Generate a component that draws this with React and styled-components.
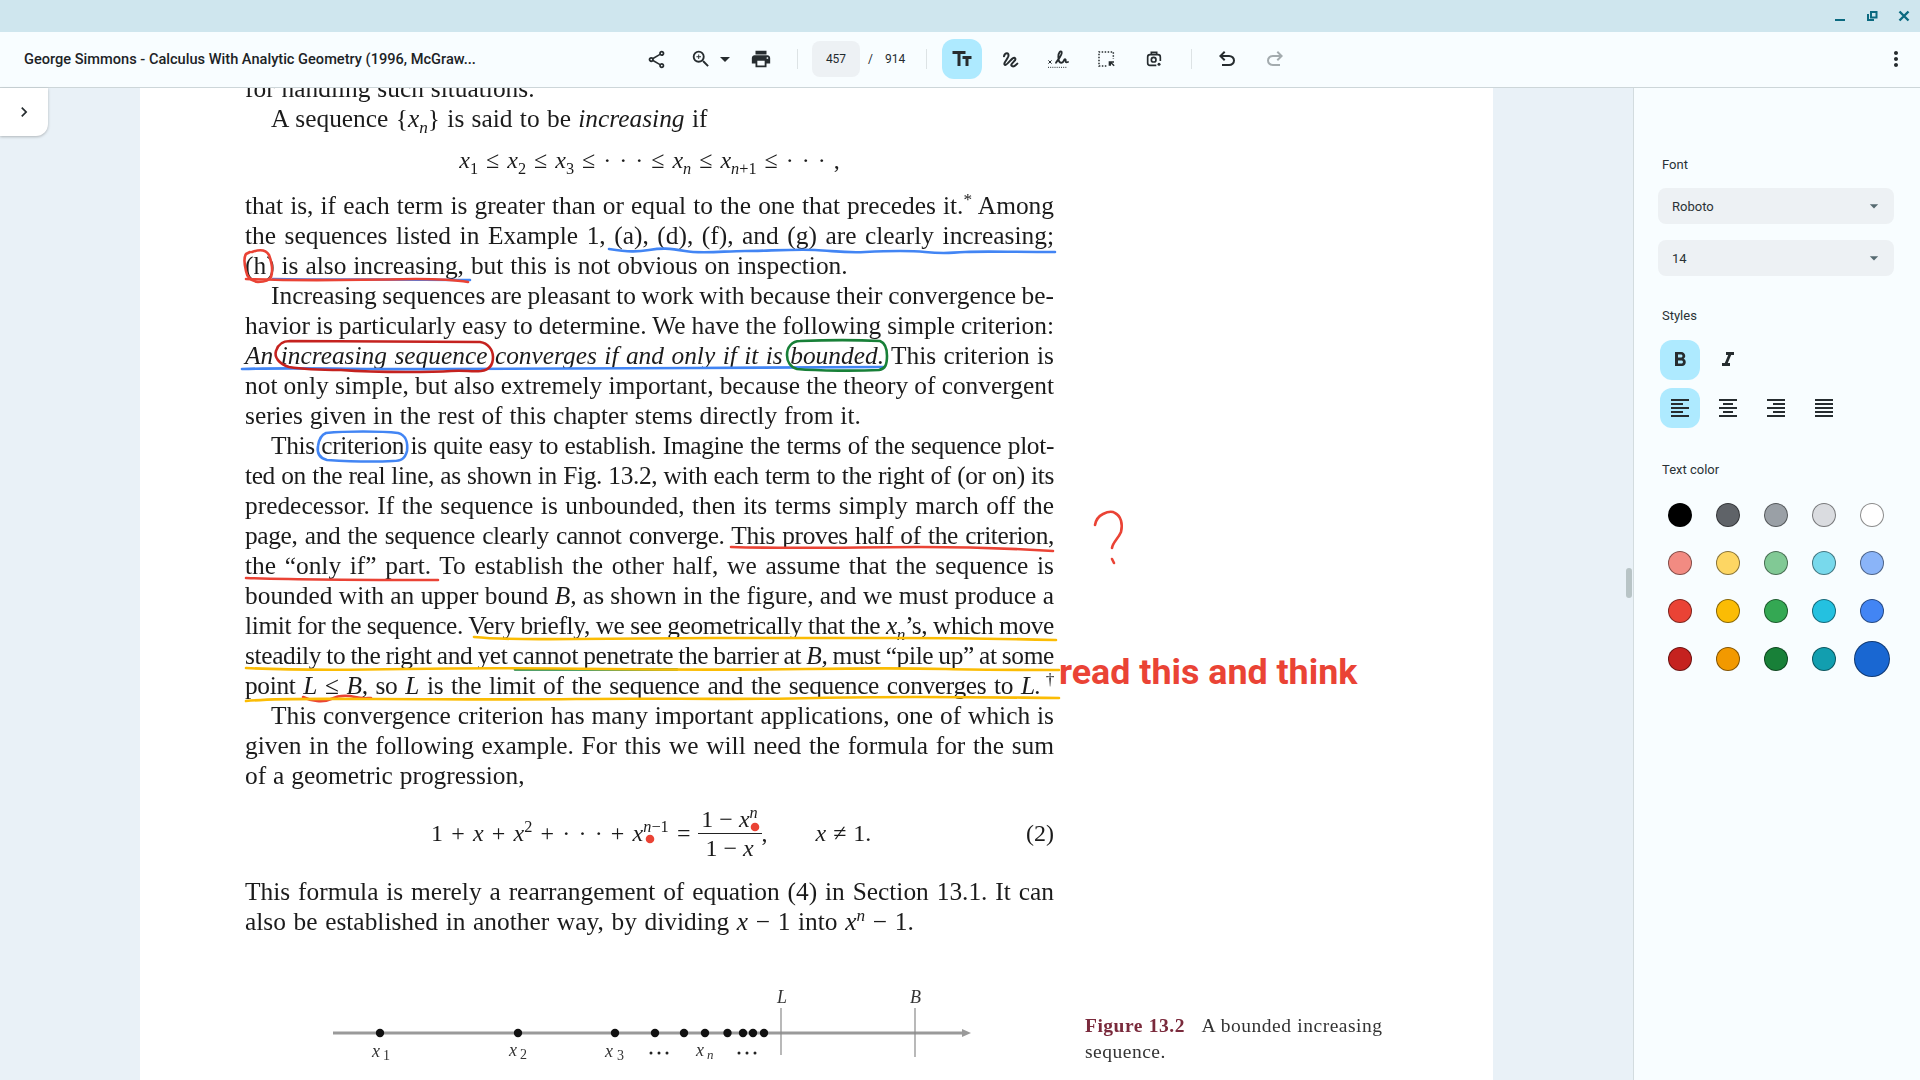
import React from 'react';
import styled, { createGlobalStyle } from 'styled-components';
import {
  MdOutlineShare, MdZoomIn, MdArrowDropDown, MdPrint, MdTextFields,
  MdMoreVert, MdChevronRight, MdFormatBold, MdFormatItalic,
  MdFormatAlignLeft, MdFormatAlignCenter, MdFormatAlignRight, MdFormatAlignJustify,
} from 'react-icons/md';

const GlobalStyle = createGlobalStyle`
  html, body { margin: 0; height: 100%; overflow: hidden; }
  body { font-family: Roboto, "Liberation Sans", sans-serif; color: #1f2a2e; }
  * { box-sizing: border-box; }
`;

const Window = styled.div`
  display: flex;
  flex-direction: column;
  width: 1920px;
  height: 1080px;
  overflow: hidden;
`;

const TitleBar = styled.div`
  display: flex;
  justify-content: flex-end;
  align-items: center;
  gap: 16px;
  height: 32px;
  padding-right: 8px;
  background: #cfe6ee;
  color: #0b6a80;
`;

const WinButton = styled.div`
  display: flex;
  align-items: center;
  justify-content: center;
  width: 16px;
  height: 16px;
`;

const Toolbar = styled.div`
  display: flex;
  align-items: center;
  height: 56px;
  padding: 0 0 1px 24px;
  background: #f8fdff;
  border-bottom: 1px solid #cdd6d9;
`;

const DocTitle = styled.div`
  width: 612px;
  font-size: 14.6px;
  font-weight: 500;
  color: #1c2326;
  white-space: nowrap;
`;

const Group = styled.div`
  display: flex;
  align-items: center;
  gap: 8px;
  margin-left: ${p => p.$left ?? 0}px;
`;

const IconButton = styled.div`
  display: flex;
  flex: none;
  align-items: center;
  justify-content: center;
  width: ${p => p.$w ?? 40}px;
  height: 40px;
  margin-left: ${p => p.$left ?? 0}px;
  border-radius: 12px;
  font-size: ${p => p.$size ?? 22}px;
  color: ${p => (p.$off ? '#a3abae' : '#262c2f')};
  background: ${p => (p.$on ? '#aeeaff' : 'transparent')};
`;

const Divider = styled.div`
  width: 1px;
  height: 20px;
  background: #dde3e5;
  margin-left: ${p => p.$left ?? 0}px;
`;

const PageBox = styled.div`
  display: flex;
  align-items: center;
  justify-content: center;
  width: 48px;
  height: 36px;
  margin-left: 14px;
  border-radius: 8px;
  background: #edf1f4;
  font-size: 12px;
`;

const PageTotal = styled.div`
  display: flex;
  gap: 12px;
  margin-left: 8px;
  font-size: 12px;
  color: #262c2f;
`;

const Body = styled.div`
  flex: 1;
  display: flex;
  min-height: 0;
`;

const Workspace = styled.div`
  position: relative;
  flex: 1;
  padding-left: 140px;
  background: #e9f1f7;
`;

const NavToggle = styled.div`
  position: absolute;
  left: 0;
  top: 0;
  display: flex;
  align-items: center;
  justify-content: center;
  width: 48px;
  height: 48px;
  background: #fff;
  border-radius: 0 0 12px 0;
  box-shadow: 0 1px 3px rgba(0, 0, 0, 0.25);
  font-size: 20px;
  color: #262c2f;
`;

const ScrollHandle = styled.div`
  position: absolute;
  right: 1px;
  top: 480px;
  width: 6px;
  height: 30px;
  border-radius: 3px;
  background: #b8c4c6;
`;

const Page = styled.div`
  position: relative;
  width: 1353px;
  height: 100%;
  padding-left: 105px;
  overflow: hidden;
  background: #fff;
`;

const PageText = styled.div`
  margin-top: -15px;
  font-family: "Liberation Serif", serif;
  font-size: 25.4px;
  color: #1b1b1b;
  filter: blur(0.4px);
`;

const Line = styled.div`
  width: 809px;
  height: 30px;
  line-height: 30px;
  padding-left: ${p => (p.$indent ? 26 : 0)}px;
  text-align: justify;
  text-align-last: ${p => (p.$last ? 'left' : 'justify')};
  word-spacing: ${p => p.$words ?? (p.$last ? 0.6 : -3)}px;
  letter-spacing: ${p => (p.$tight ? -0.35 : 0)}px;
  sub, sup { font-size: 0.68em; line-height: 0; }
`;

const Equation = styled.div`
  display: flex;
  align-items: center;
  justify-content: ${p => (p.$center ? 'center' : 'flex-start')};
  width: 809px;
  height: ${p => p.$h}px;
  padding-left: ${p => p.$pad ?? 0}px;
  padding-bottom: ${p => p.$lift ?? 0}px;
  font-size: 24px;
  white-space: pre;
`;

const Formula = styled.span`
  word-spacing: ${p => p.$words ?? 1}px;
  sub, sup { font-size: 0.68em; line-height: 0; }
`;

const Fraction = styled.span`
  display: inline-flex;
  flex-direction: column;
  align-items: center;
  width: 64px;
  margin-left: 7px;
  line-height: 28px;
  sup { font-size: 0.68em; line-height: 0; }
`;

const Numerator = styled.span`
  width: 100%;
  text-align: center;
  border-bottom: 1px solid #222;
`;

const EqGap = styled.span`
  margin-left: ${p => p.$w}px;
`;

const EqNumber = styled.span`
  margin-left: auto;
`;

const FigureRow = styled.div`
  display: flex;
  align-items: flex-start;
  width: 1240px;
  margin-top: 36px;
`;

const FigureSvg = styled.svg`
  flex: none;
  font-family: "Liberation Serif", serif;
`;

const Caption = styled.div`
  margin: 41px 0 0 31px;
  width: 320px;
  font-size: 19.5px;
  line-height: 26px;
  letter-spacing: 0.5px;
  word-spacing: 0.5px;
  color: #333;
  white-space: pre-wrap;
`;

const CaptionHead = styled.b`
  color: #7a2a3c;
`;

const Overlay = styled.svg`
  position: absolute;
  left: 0;
  top: 0;
  fill: none;
  stroke-linecap: round;
  stroke-linejoin: round;
  stroke-width: 2.6;
`;

const StickyText = styled.div`
  position: absolute;
  left: 919px;
  top: 561px;
  font-family: Roboto, sans-serif;
  font-size: 35.8px;
  font-weight: 700;
  line-height: 46px;
  white-space: nowrap;
  color: #ea4335;
`;

const SidePanel = styled.aside`
  flex: none;
  width: 287px;
  padding: 69px 26px 0 24px;
  background: #f8fdff;
  border-left: 1px solid #d3dcdf;
`;

const PanelLabel = styled.div`
  margin: ${p => p.$before ?? 0}px 0 ${p => p.$after ?? 15}px 4px;
  font-size: 13px;
  line-height: 16px;
  color: #2a3235;
`;

const Select = styled.div`
  display: flex;
  align-items: center;
  justify-content: space-between;
  width: 236px;
  height: 36px;
  margin-bottom: 16px;
  padding: 0 10px 0 14px;
  border-radius: 8px;
  background: #edf1f4;
  font-size: 13px;
  color: #2a3235;
  svg { font-size: 20px; color: #566a70; }
`;

const StyleRow = styled.div`
  display: flex;
  gap: 8px;
  margin: 0 0 8px 2px;
`;

const Swatches = styled.div`
  display: grid;
  grid-template-columns: repeat(5, 24px);
  grid-auto-rows: 24px;
  gap: 24px;
  margin-left: 10px;
`;

const Swatch = styled.div`
  justify-self: center;
  align-self: center;
  width: ${p => (p.$big ? 36 : 24)}px;
  height: ${p => (p.$big ? 36 : 24)}px;
  margin: ${p => (p.$big ? -6 : 0)}px;
  border-radius: 50%;
  background: ${p => p.$color};
  border: 1px solid rgba(0, 0, 0, 0.45);
`;

const SWATCHES = [
  '#000000', '#5f6368', '#9aa0a6', '#dadce0', '#ffffff',
  '#f28b82', '#fdd663', '#81c995', '#78d9ec', '#8ab4f8',
  '#ea4335', '#fbbc04', '#34a853', '#24c1e0', '#4285f4',
  '#c5221f', '#f29900', '#188038', '#129eaf', '#1967d2',
];

const Minimize = () => (
  <svg width="16" height="16" viewBox="0 0 16 16"><rect x="3" y="11" width="10" height="2" fill="currentColor" /></svg>
);
const Restore = () => (
  <svg width="16" height="16" viewBox="0 0 16 16" fill="none" stroke="currentColor" strokeWidth="2">
    <path d="M4 6v6h6" />
    <rect x="7" y="4" width="5.500" height="5.500" />
  </svg>
);
const CloseX = () => (
  <svg width="16" height="16" viewBox="0 0 16 16" stroke="currentColor" strokeWidth="2.400"><path d="M3.500 3.500 12.500 12.500M12.500 3.500 3.500 12.500" /></svg>
);
const DrawIcon = () => (
  <svg width="22" height="22" viewBox="27 35 66 66" fill="none" stroke="currentColor" strokeWidth="6" strokeLinecap="round" strokeLinejoin="round">
    <path d="M42 60C45 48 58 48 55 60 52 70 38 82 45 86 50 88 62 70 68 66 75 62 80 68 72 75 65 82 60 88 68 90 72 91 78 86 82 82" />
  </svg>
);
const SignIcon = () => (
  <svg width="24" height="24" viewBox="168 33 72 72" fill="none" stroke="currentColor" strokeLinecap="round" strokeLinejoin="round">
    <path d="M198 80C205 70 218 55 215 48 212 42 205 50 205 62 205 75 208 82 216 80 222 78 222 68 226 70 230 72 222 82 234 78" strokeWidth="5.500" />
    <path d="M176 74l8 8M184 74l-8 8" strokeWidth="3" />
    <path d="M174 94H230" strokeWidth="3" strokeLinecap="butt" strokeDasharray="3 3.500" />
  </svg>
);
const SelectIcon = () => (
  <svg width="22" height="22" viewBox="315 36 66 66" fill="none" stroke="currentColor">
    <path d="M349 90H327V48H370V68" strokeWidth="4.500" strokeDasharray="4.500 4.500" />
    <path d="M356 76H372V80H366L374 88 371 91 363 83V89H356Z" fill="currentColor" stroke="none" />
  </svg>
);
const OcrIcon = () => (
  <svg width="22" height="22" viewBox="459 36 66 66" fill="none" stroke="currentColor" strokeWidth="5">
    <path d="M499 88H480Q473 88 473 81V63Q473 56 480 56H504Q511 56 511 63V75M484 56V49H500V56" />
    <circle cx="491" cy="71" r="7" />
    <circle cx="507" cy="85" r="4.500" fill="currentColor" stroke="none" />
  </svg>
);
const UNDO_PATH = 'M7 19v-2h7.100q1.575 0 2.738-1T18 13.500q0-1.500-1.162-2.500T14.100 10H7.800l2.600 2.600L9 14 4 9l5-5 1.400 1.400L7.800 8h6.300q2.425 0 4.162 1.575T20 13.500q0 2.350-1.738 3.925T14.100 19H7z';
const Undo = () => (
  <svg width="24" height="24" viewBox="0 0 24 24" fill="currentColor"><path d={UNDO_PATH} /></svg>
);
const Redo = () => (
  <svg width="24" height="24" viewBox="0 0 24 24" fill="currentColor"><path d={UNDO_PATH} transform="matrix(-1 0 0 1 24 0)" /></svg>
);

const App = () => (
  <Window>
    <GlobalStyle />
    <TitleBar>
      <WinButton><Minimize /></WinButton>
      <WinButton><Restore /></WinButton>
      <WinButton><CloseX /></WinButton>
    </TitleBar>
    <Toolbar>
      <DocTitle>George Simmons - Calculus With Analytic Geometry (1996, McGraw...</DocTitle>
      <IconButton $size={21}><MdOutlineShare /></IconButton>
      <IconButton $w={24} $left={13}><MdZoomIn /></IconButton>
      <IconButton $w={24} $size={24}><MdArrowDropDown /></IconButton>
      <IconButton $left={4}><MdPrint /></IconButton>
      <Divider $left={16} />
      <PageBox>457</PageBox>
      <PageTotal><span>/</span><span>914</span></PageTotal>
      <Divider $left={21} />
      <Group $left={15}>
        <IconButton $on $size={24}><MdTextFields /></IconButton>
        <IconButton><DrawIcon /></IconButton>
        <IconButton><SignIcon /></IconButton>
        <IconButton><SelectIcon /></IconButton>
        <IconButton><OcrIcon /></IconButton>
      </Group>
      <Divider $left={17} />
      <Group $left={15}>
        <IconButton><Undo /></IconButton>
        <IconButton $off><Redo /></IconButton>
      </Group>
      <IconButton $left={581} $size={24}><MdMoreVert /></IconButton>
    </Toolbar>
    <Body>
      <Workspace>
        <Page>
          <PageText>
            <Line $last>for handling such situations.</Line>
            <Line $indent $last $words={1}>A sequence {'{'}<i>x<sub>n</sub></i>{'}'} is said to be <i>increasing</i> if</Line>
            <Equation $center $h={57} $lift={2}>
              <Formula $words={2}>
                <i>x</i><sub>1</sub> ≤ <i>x</i><sub>2</sub> ≤ <i>x</i><sub>3</sub> ≤ · · · ≤ <i>x<sub>n</sub></i> ≤ <i>x</i><sub><i>n</i>+1</sub> ≤ · · · ,
              </Formula>
            </Equation>
            <Line>that is, if each term is greater than or equal to the one that precedes it.<sup>*</sup> Among</Line>
            <Line>the sequences listed in Example 1, (a), (d), (f), and (g) are clearly increasing;</Line>
            <Line $last>(h) is also increasing, but this is not obvious on inspection.</Line>
            <Line $indent>Increasing sequences are pleasant to work with because their convergence be-</Line>
            <Line>havior is particularly easy to determine. We have the following simple criterion:</Line>
            <Line><i>An increasing sequence converges if and only if it is bounded.</i> This criterion is</Line>
            <Line>not only simple, but also extremely important, because the theory of convergent</Line>
            <Line $last>series given in the rest of this chapter stems directly from it.</Line>
            <Line $indent $tight>This criterion is quite easy to establish. Imagine the terms of the sequence plot-</Line>
            <Line $tight>ted on the real line, as shown in Fig. 13.2, with each term to the right of (or on) its</Line>
            <Line>predecessor. If the sequence is unbounded, then its terms simply march off the</Line>
            <Line $tight>page, and the sequence clearly cannot converge. This proves half of the criterion,</Line>
            <Line>the “only if” part. To establish the other half, we assume that the sequence is</Line>
            <Line>bounded with an upper bound <i>B,</i> as shown in the figure, and we must produce a</Line>
            <Line $tight>limit for the sequence. Very briefly, we see geometrically that the <i>x<sub>n</sub></i>’s, which move</Line>
            <Line $tight>steadily to the right and yet cannot penetrate the barrier at <i>B,</i> must “pile up” at some</Line>
            <Line $tight>point <i>L</i> ≤ <i>B,</i> so <i>L</i> is the limit of the sequence and the sequence converges to <i>L.</i><sup>†</sup></Line>
            <Line $indent>This convergence criterion has many important applications, one of which is</Line>
            <Line>given in the following example. For this we will need the formula for the sum</Line>
            <Line $last>of a geometric progression,</Line>
            <Equation $h={86} $pad={186}>
              <Formula $words={2.2}>1 + <i>x</i> + <i>x</i><sup>2</sup> + · · · + <i>x</i><sup><i>n</i>−1</sup> =</Formula>
              <Fraction><Numerator>1 − <i>x<sup>n</sup></i></Numerator><span>1 − <i>x</i></span></Fraction>
              <span>,</span>
              <EqGap $w={48}><Formula><i>x</i> ≠ 1.</Formula></EqGap>
              <EqNumber>(2)</EqNumber>
            </Equation>
            <Line>This formula is merely a rearrangement of equation (4) in Section 13.1. It can</Line>
            <Line $last $words={1.300}>also be established in another way, by dividing <i>x</i> − 1 into <i>x<sup>n</sup></i> − 1.</Line>
            <FigureRow>
              <FigureSvg width="809" height="108" viewBox="245 972 809 108">
                <path d="M333 1033H964" stroke="#9a9a9a" strokeWidth="3" />
                <path d="M962 1029l9 4-9 4z" fill="#9a9a9a" />
                <path d="M781 1008v47M915 1008v49" stroke="#8a8a8a" strokeWidth="1.200" />
                {[380, 518, 615, 655, 684, 705, 727.5, 743, 753, 764].map(x => (
                  <circle key={x} cx={x} cy="1033" r="4.200" fill="#111" />
                ))}
                <g fontSize="18" fontStyle="italic" fill="#333">
                  <text x="777" y="1003">L</text>
                  <text x="910" y="1003">B</text>
                  <text x="372" y="1057">x</text>
                  <text x="509" y="1056">x</text>
                  <text x="605" y="1057">x</text>
                  <text x="696" y="1056">x</text>
                  <text x="707" y="1059" fontSize="13">n</text>
                </g>
                <g fontSize="14" fill="#333">
                  <text x="383" y="1060">1</text>
                  <text x="520" y="1059">2</text>
                  <text x="617" y="1060">3</text>
                </g>
                <g fill="#222">
                  {[651, 659, 667, 739, 747, 755].map(x => (
                    <circle key={x} cx={x} cy="1053" r="1.500" />
                  ))}
                </g>
              </FigureSvg>
              <Caption><CaptionHead>Figure 13.2</CaptionHead>{'   '}A bounded increasing sequence.</Caption>
            </FigureRow>
          </PageText>
          <Overlay width="1353" height="992" viewBox="140 88 1353 992">
            <g stroke="#4285f4">
              <path d="M609 249c20 3 28 3 40 1s20-2 36 1 40 0 60 0 50-2 70-1 30 3 50 2 40-2 60 0 20 1 40 0 40 0 90 0" />
              <path d="M273 279c50 1 120 0 197 1" />
              <path d="M242 369c60-2 130 1 200 0s150-1 250-1 160-1 191-1" />
              <path d="M326 433c20-2 55-2 72 0 8 2 10 10 9 18-2 8-6 10-14 10-20 1-50 0-66-1-8-2-10-8-9-14 1-7 3-11 8-13z" />
            </g>
            <g stroke="#ea4335">
              <path d="M246 279c50 2 120 1 170 0 20 0 40 1 52 3" />
              <path d="M252 252c8-3 14-2 17 3 3 8 4 16 2 22-2 4-7 5-13 5-7-1-11-5-12-11-2-8-2-14 0-17l4-2" />
              <path d="M731 547c60 2 130 0 190 0s100 2 132 4" />
              <path d="M246 578c60 2 130 2 192 2" />
              <path d="M303 697c8 4 20 6 28 2s16-4 24-2 12 1 16 1" />
              <path d="M1095 525c1-6 4-9 8-11 4-2 9-3 12-1 6 3 8 11 6 19-3 7-8 10-9 16" />
              <path d="M1112 559l2 4" />
              <circle cx="650" cy="839" r="3" fill="#ea4335" />
              <circle cx="755" cy="827" r="3" fill="#ea4335" />
            </g>
            <g stroke="#c5221f">
              <path d="M290 341c50 0 120 1 190 1 8 1 13 8 13 15 0 8-4 13-12 14-10 1-16-1-30 0s-70 2-110-1c-20 0-40-1-52-3-10-3-15-10-13-16 2-7 6-10 14-10z" />
            </g>
            <g stroke="#188038">
              <path d="M800 341c25-1 60-1 80 0 5 2 7 8 7 15 0 9-2 13-8 14-20 1-60 1-82-1-7-2-10-8-10-14 0-8 5-14 13-14z" />
              <path d="M515 669.500h162" />
            </g>
            <g stroke="#fbbc04">
              <path d="M474 637c30 3 60 2 100 2s80-1 140-1 120 0 180 0 120 1 162 2" />
              <path d="M246 668c40 2 100 2 160 1s120-1 200 0 130 1 200 0 100-1 140 0 80 1 113 1" />
              <path d="M246 701c30-3 70-2 130-2s120 1 200 0 160 1 240-1 140-1 243 0" />
            </g>
          </Overlay>
          <StickyText>read this and think</StickyText>
        </Page>
        <NavToggle><MdChevronRight /></NavToggle>
        <ScrollHandle />
      </Workspace>
      <SidePanel>
        <PanelLabel>Font</PanelLabel>
        <Select>Roboto<MdArrowDropDown /></Select>
        <Select>14<MdArrowDropDown /></Select>
        <PanelLabel $before={32} $after={16}>Styles</PanelLabel>
        <StyleRow>
          <IconButton $on $size={24}><MdFormatBold /></IconButton>
          <IconButton $size={24}><MdFormatItalic /></IconButton>
        </StyleRow>
        <StyleRow>
          <IconButton $on $size={24}><MdFormatAlignLeft /></IconButton>
          <IconButton $size={24}><MdFormatAlignCenter /></IconButton>
          <IconButton $size={24}><MdFormatAlignRight /></IconButton>
          <IconButton $size={24}><MdFormatAlignJustify /></IconButton>
        </StyleRow>
        <PanelLabel $before={34} $after={25}>Text color</PanelLabel>
        <Swatches>
          {SWATCHES.map((color, i) => (
            <Swatch key={color} $color={color} $big={i === SWATCHES.length - 1} />
          ))}
        </Swatches>
      </SidePanel>
    </Body>
  </Window>
);

export default App;
